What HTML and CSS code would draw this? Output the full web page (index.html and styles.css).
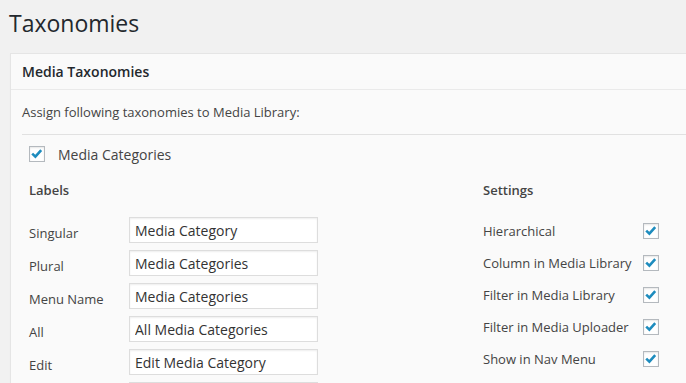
FILE: index.html
```html
<!DOCTYPE html>
<html lang="en">
<head>
  <meta charset="UTF-8">
  <title>Taxonomies</title>
  <link rel="stylesheet" href="styles.css">
</head>
<body>
  <div class="wrap">
    <h1>Taxonomies</h1>

    <div class="postbox">
      <h3 class="hndle">Media Taxonomies</h3>
      <div class="inside">
        <p class="intro">Assign following taxonomies to Media Library:</p>
        <hr>

        <label class="tax-toggle">
          <span class="cb checked"></span>
          <span>Media Categories</span>
        </label>

        <div class="tax-options">
          <div class="labels-col">
            <h4>Labels</h4>
            <div class="labels-grid">
              <span class="lbl">Singular</span>
              <input type="text" value="Media Category">
              <span class="lbl">Plural</span>
              <input type="text" value="Media Categories">
              <span class="lbl">Menu Name</span>
              <input type="text" value="Media Categories">
              <span class="lbl">All</span>
              <input type="text" value="All Media Categories">
              <span class="lbl">Edit</span>
              <input type="text" value="Edit Media Category">
              <span class="lbl"></span>
              <input type="text" value="">
            </div>
          </div>

          <div class="settings-col">
            <h4>Settings</h4>
            <div class="settings-list">
              <div class="setting"><span>Hierarchical</span><span class="cb checked"></span></div>
              <div class="setting"><span>Column in Media Library</span><span class="cb checked"></span></div>
              <div class="setting"><span>Filter in Media Library</span><span class="cb checked"></span></div>
              <div class="setting"><span>Filter in Media Uploader</span><span class="cb checked"></span></div>
              <div class="setting"><span>Show in Nav Menu</span><span class="cb checked"></span></div>
            </div>
          </div>
        </div>
      </div>
    </div>
  </div>
</body>
</html>
```

FILE: styles.css
```css
body {
  margin: 0;
  background: #f1f1f1;
  font-family: "Open Sans", "Noto Sans", sans-serif;
  font-size: 13px;
  color: #444;
  overflow: hidden;
}

.wrap {
  padding: 9px 0 0 10px;
}

h1 {
  margin: 0 0 15px -1px;
  font-size: 23px;
  font-weight: 400;
  line-height: 29px;
  color: #23282d;
}

.postbox {
  width: 760px;
  background: #fafafa;
  border: 1px solid #e5e5e5;
  box-shadow: 0 1px 1px rgba(0, 0, 0, .04);
}

.hndle {
  margin: 0;
  padding: 8px 11px;
  height: 19px;
  font-size: 14px;
  font-weight: 600;
  line-height: 19px;
  color: #23282d;
  border-bottom: 1px solid #eaeaea;
}

.inside {
  padding: 0 0 0 11px;
}

.intro {
  margin: 0;
  padding: 12px 0;
  line-height: 20px;
}

hr {
  margin: 0;
  border: 0;
  border-top: 1px solid #e1e1e1;
}

/* checkboxes */
.cb {
  display: inline-block;
  box-sizing: border-box;
  width: 16px;
  height: 16px;
  background: #fff;
  border: 1px solid #b4b9be;
  box-shadow: inset 0 1px 2px rgba(0, 0, 0, .1);
  flex: none;
}

.cb.checked {
  background: #fff url("data:image/svg+xml,%3Csvg xmlns='http://www.w3.org/2000/svg' viewBox='0 0 16 16'%3E%3Cpath d='M3.2 7.6 L6.4 10.6 L12.2 4.2' fill='none' stroke='%231e8cbe' stroke-width='2.6'/%3E%3C/svg%3E") center / 16px 16px no-repeat;
}

.tax-toggle {
  display: flex;
  align-items: center;
  gap: 13px;
  margin: 11px 0 0 7px;
  height: 16px;
  font-size: 14px;
  color: #444;
}

.tax-options {
  display: flex;
  margin: 18px 0 0 7px;
}

h4 {
  margin: 0;
  font-size: 13px;
  font-weight: 600;
  line-height: 20px;
  color: #444;
}

.labels-col {
  width: 454px;
}

.labels-grid {
  display: grid;
  grid-template-columns: 100px 189px;
  grid-auto-rows: 26px;
  row-gap: 7px;
  margin-top: 17px;
}

.lbl {
  padding-top: 6px;
  line-height: 20px;
}

input[type="text"] {
  box-sizing: border-box;
  width: 189px;
  height: 26px;
  margin: 0;
  padding: 0 5px;
  font-family: inherit;
  font-size: 14px;
  color: #333;
  background: #fff;
  border: 1px solid #ddd;
  box-shadow: inset 0 1px 2px rgba(0, 0, 0, .07);
  outline: none;
}

.settings-list {
  display: flex;
  flex-direction: column;
  gap: 16px;
  margin-top: 23px;
}

.setting {
  display: flex;
  align-items: center;
  width: 176px;
  height: 16px;
}

.setting span:first-child {
  width: 160px;
  line-height: 16px;
}
```
